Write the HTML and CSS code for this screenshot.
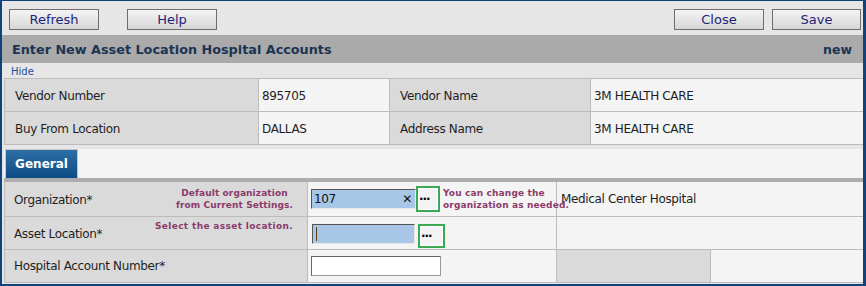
FILE: index.html
```html
<!DOCTYPE html>
<html>
<head>
	<meta charset="utf-8">
	<title>Enter New Asset Location Hospital Accounts</title>
	<link rel="stylesheet" href="styles.css">
</head>
<body>
	<div class="frame">
		<div class="toolbar">
			<button class="tb-btn">Refresh</button>
			<button class="tb-btn tb-btn--help">Help</button>
			<span class="toolbar__spacer"></span>
			<button class="tb-btn">Close</button>
			<button class="tb-btn tb-btn--save">Save</button>
		</div>

		<div class="title">
			<h1>Enter New Asset Location Hospital Accounts</h1>
			<span class="title__mode">new</span>
		</div>

		<div class="hide-row"><a href="javascript://">Hide</a></div>

		<table class="info">
			<tr>
				<td class="lbl info__c1">Vendor Number</td>
				<td class="val info__c2">895705</td>
				<td class="lbl info__c3">Vendor Name</td>
				<td class="val">3M HEALTH CARE</td>
			</tr>
			<tr>
				<td class="lbl">Buy From Location</td>
				<td class="val">DALLAS</td>
				<td class="lbl">Address Name</td>
				<td class="val">3M HEALTH CARE</td>
			</tr>
		</table>

		<div class="tabs">
			<div class="tab tab--active">General</div>
		</div>

		<table class="form">
			<tr>
				<td class="lbl form__c1">
					<div class="field-lbl">
						<span>Organization*</span>
						<span class="note note--center">Default organization<br>from Current Settings.</span>
					</div>
				</td>
				<td class="val form__c2">
					<div class="field">
						<div class="lookup">
							<span class="lookup__text">107</span>
							<span class="lookup__clear">&#x2715;</span>
						</div>
						<button class="dots">&middot;&middot;&middot;</button>
						<span class="note note--side">You can change the<br>organization as needed.</span>
					</div>
				</td>
				<td class="val form__desc" colspan="2">Medical Center Hospital</td>
			</tr>
			<tr>
				<td class="lbl">
					<div class="field-lbl">
						<span>Asset Location*</span>
						<span class="note note--high">Select the asset location.</span>
					</div>
				</td>
				<td class="val">
					<div class="field">
						<div class="lookup lookup--empty"><span class="caret"></span></div>
						<button class="dots dots--low">&middot;&middot;&middot;</button>
					</div>
				</td>
				<td class="val" colspan="2"></td>
			</tr>
			<tr>
				<td class="lbl">Hospital Account Number*</td>
				<td class="val"><input type="text" class="plain-input"></td>
				<td class="lbl form__c3"></td>
				<td class="val"></td>
			</tr>
		</table>
	</div>
</body>
</html>
```

FILE: styles.css
```css
html, body {
	margin: 0;
	height: 100%;
}

body {
	font-family: "DejaVu Sans", Verdana, sans-serif;
	font-size: 12px;
	color: #1e1e1e;
	background: #fff;
}

.frame {
	box-sizing: border-box;
	height: 286px;
	border-style: solid;
	border-color: #12427a;
	border-width: 1px 3px 2px 2px;
	background: #e6e6e6;
	overflow: hidden;
}

/* toolbar */
.toolbar {
	display: flex;
	align-items: flex-start;
	height: 34px;
	padding: 8px 2px 0 7px;
	box-sizing: border-box;
	gap: 8px;
}

.toolbar__spacer {
	flex: 1;
}

.tb-btn {
	width: 90px;
	height: 21px;
	padding: 0;
	font-family: inherit;
	font-size: 13px;
	color: #1f1f78;
	background: linear-gradient(#f4f4f4, #d6d6d6);
	border: 1px solid #6e6e6e;
	border-radius: 0;
}

.tb-btn--help {
	margin-left: 20px;
}

.tb-btn--save {
	width: 89px;
}

/* title bar */
.title {
	display: flex;
	align-items: center;
	justify-content: space-between;
	height: 28px;
	padding: 0 11px 0 10px;
	background: #a9aaa9;
	color: #1c3454;
}

.title h1 {
	margin: 0;
	font-size: 12.8px;
	font-weight: bold;
}

.title__mode {
	font-size: 12.5px;
	font-weight: bold;
}

.hide-row {
	height: 15px;
	padding-left: 9px;
	font-size: 10px;
	line-height: 17px;
}

.hide-row a {
	color: #1b4c9a;
	text-decoration: none;
}

/* tables */
table {
	border-collapse: collapse;
	margin-left: 2px;
	width: 860px;
	table-layout: fixed;
}

td {
	border: 1px solid #bcbcbc;
	padding: 0 0 0 9px;
	vertical-align: middle;
	white-space: nowrap;
	letter-spacing: -0.35px;
}

.lbl {
	background: #dadada;
}

.val {
	background: #f4f4f4;
}

.info td {
	height: 30px;
	padding-top: 2px;
	padding-left: 10px;
}

.info__c1 { width: 243px; }
.info__c2 { width: 127px; }
.info__c3 { width: 190px; }

.info tr td:nth-child(2),
.info tr td:nth-child(4) { padding-left: 3px; }

.tabs {
	margin: 4px 0 0 2px;
	height: 29px;
	background: #f4f4f4;
	border-bottom: 4px solid #adadad;
	display: flex;
}

.tab {
	width: 73px;
	box-sizing: border-box;
	height: 29px;
	line-height: 28px;
	text-align: center;
	font-weight: bold;
	font-size: 12px;
	color: #fff;
	background: linear-gradient(#2d6fa6, #0e4b86);
	border: 1px solid #c4c4c4;
	border-bottom: none;
	margin-left: 1px;
}

.form td {
	height: 32px;
}

.form tr:first-child td {
	border-top: none;
	height: 34px;
}

.form__c1 { width: 293px; }
.form__c2 { width: 245px; }
.form__c3 { width: 144px; }

.form tr td:nth-child(2) { padding-left: 3px; }

.form td.form__desc {
	padding-left: 4px;
}

.field-lbl {
	display: flex;
	justify-content: space-between;
	align-items: center;
	padding-right: 14px;
}

.field-lbl > span:first-child {
	padding-top: 2px;
}

.note {
	font-size: 9px;
	font-weight: bold;
	color: #8a3a6c;
	line-height: 12px;
	letter-spacing: 0.1px;
}

.note--center {
	text-align: center;
}

.note--high {
	align-self: flex-start;
	margin-top: -5px;
	letter-spacing: 0.35px;
}

.note--side {
	margin-left: 3px;
	letter-spacing: 0.15px;
}

.field {
	display: flex;
	align-items: center;
}

.lookup {
	flex-shrink: 0;
	box-sizing: border-box;
	width: 105px;
	height: 20px;
	background: #a8c6e5;
	border: 1px solid #e8e8e8;
	border-top-color: #555;
	border-left-color: #555;
	display: flex;
	align-items: center;
	justify-content: space-between;
	padding: 0 3px 0 2px;
	font-size: 12px;
	color: #111;
}

.lookup__clear {
	font-size: 12px;
}

.lookup--empty {
	width: 103px;
	margin-left: 1px;
	margin-top: 2px;
}

.caret {
	width: 1px;
	height: 14px;
	background: #5a3a1a;
	margin-left: 1px;
}

.dots {
	flex-shrink: 0;
	box-sizing: border-box;
	width: 24px;
	height: 26px;
	padding: 0 0 0 1px;
	margin-left: 0;
	border: 2px solid #3da855;
	background: #f4f4f4;
	box-shadow: inset 0 0 0 1px #fff;
	font-family: "DejaVu Sans", sans-serif;
	font-weight: bold;
	font-size: 12px;
	line-height: 8px;
	letter-spacing: -1px;
	color: #000;
	text-align: left;
}

.dots--low {
	width: 27px;
	height: 24px;
	margin-left: 3px;
	margin-top: 6px;
}

.plain-input {
	box-sizing: border-box;
	width: 130px;
	height: 20px;
	margin: 0;
	border: 1px solid #666;
	border-right-color: #999;
	border-bottom-color: #999;
	background: #fff;
}
```
